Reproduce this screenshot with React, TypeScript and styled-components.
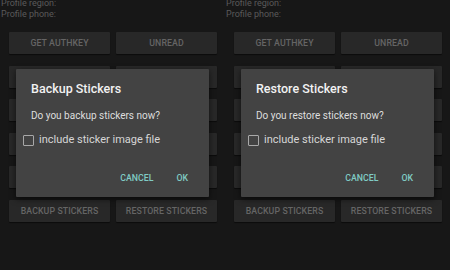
import React from "react";
import styled, { createGlobalStyle } from "styled-components";

const Global = createGlobalStyle`
  html, body { margin: 0; padding: 0; background: #171717; }
  body { font-family: Roboto, "Noto Sans", "Liberation Sans", sans-serif; overflow: hidden; }
`;

const Screen = styled.div`
  display: flex;
  width: 450px;
  height: 270px;
  background: #171717;
`;

const Panel = styled.div`
  position: relative;
  width: 225px;
  height: 270px;
  overflow: hidden;
`;

const Profile = styled.div`
  margin-top: -2px;
  padding-left: 1px;
  font-size: 9px;
  line-height: 11px;
  color: #5a5a5a;
`;

const Grid = styled.div`
  display: grid;
  grid-template-columns: 101px 101px;
  grid-auto-rows: 22px;
  column-gap: 6px;
  row-gap: 11.6px;
  padding-left: 9px;
  margin-top: 12px;
`;

const Btn = styled.div`
  background: #282828;
  box-shadow: 0 1px 1px rgba(0, 0, 0, 0.5);
  border-radius: 1px;
  display: flex;
  align-items: center;
  justify-content: center;
  font-size: 8.75px;
  font-weight: 500;
  color: #656565;
  letter-spacing: 0.1px;
`;

const Dialog = styled.div`
  position: absolute;
  left: 16px;
  top: 69px;
  width: 193px;
  height: 128px;
  box-sizing: border-box;
  background: #434343;
  box-shadow: 0 2px 6px rgba(0, 0, 0, 0.6);
  border-radius: 1px;
  display: flex;
  flex-direction: column;
  padding: 12px 0 8px 15px;
`;

const Title = styled.div`
  font-size: 12.5px;
  line-height: 15px;
  font-weight: 500;
  color: #f2f2f2;
`;

const Message = styled.div`
  margin-top: 13px;
  font-size: 10px;
  line-height: 13px;
  color: #dedede;
`;

const CheckRow = styled.label`
  margin-top: 11px;
  margin-left: -8px;
  display: flex;
  align-items: center;
  gap: 5px;
  font-size: 11px;
  line-height: 14px;
  color: #d6d6d6;
`;

const Box = styled.span`
  width: 9px;
  height: 9px;
  border: 1.6px solid #a8a8a8;
  border-radius: 1px;
`;

const Actions = styled.div`
  margin-top: auto;
  display: flex;
  justify-content: flex-end;
  padding-right: 21px;
  gap: 23px;
`;

const Action = styled.div`
  font-size: 8.75px;
  line-height: 22px;
  font-weight: 500;
  color: #80cbc4;
`;

const rows = [
  ["GET AUTHKEY", "UNREAD"],
  ["", ""],
  ["", ""],
  ["", ""],
  ["", ""],
  ["BACKUP STICKERS", "RESTORE STICKERS"],
];

function Screenshot({ verb }: { verb: string }) {
  return (
    <Panel>
      <Profile>
        <div>Profile region:</div>
        <div>Profile phone:</div>
      </Profile>
      <Grid>
        {rows.flat().map((l, i) => (
          <Btn key={i}>{l}</Btn>
        ))}
      </Grid>
      <Dialog>
        <Title>{verb} Stickers</Title>
        <Message>Do you {verb.toLowerCase()} stickers now?</Message>
        <CheckRow>
          <Box />
          include sticker image file
        </CheckRow>
        <Actions>
          <Action>CANCEL</Action>
          <Action>OK</Action>
        </Actions>
      </Dialog>
    </Panel>
  );
}

export default function App() {
  return (
    <>
      <Global />
      <Screen>
        <Screenshot verb="Backup" />
        <Screenshot verb="Restore" />
      </Screen>
    </>
  );
}
